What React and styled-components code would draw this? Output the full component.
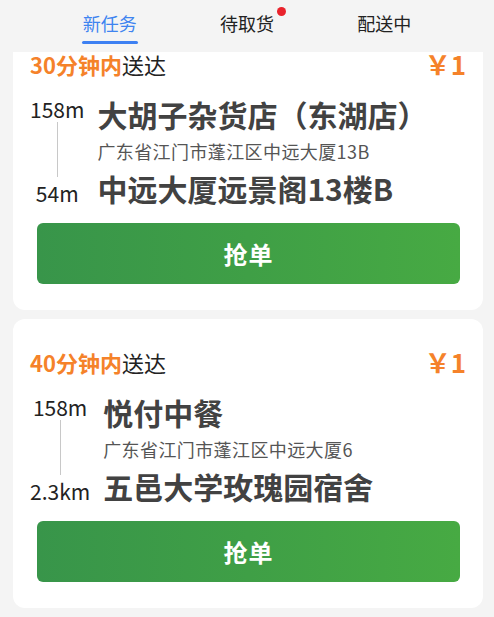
import React, { useLayoutEffect, useRef } from "react";
import styled, { createGlobalStyle } from "styled-components";

const Global = createGlobalStyle`
  html, body { margin: 0; padding: 0; background: #f4f4f4; }
  body { font-family: "Noto Sans CJK SC", "Noto Sans", sans-serif; }
  * { box-sizing: border-box; }
`;

const Page = styled.div`
  height: 617px;
  display: flex;
  flex-direction: column;
  background: #f4f4f4;
  overflow: hidden;
`;

const TabBar = styled.div`
  flex: 0 0 52px;
  display: grid;
  grid-template-columns: repeat(3, 1fr);
  padding: 0 41px;
`;

const Tab = styled.div`
  display: flex;
  flex-direction: column;
  align-items: center;
  padding-top: 10px;
`;

const TabLabel = styled.span`
  position: relative;
  font-size: 18px;
  line-height: 27px;
  color: ${(p) => (p.$active ? "#3f84f0" : "#222")};
`;

const Dot = styled.span`
  position: absolute;
  right: -12px;
  top: -3px;
  width: 9px;
  height: 9px;
  border-radius: 50%;
  background: #e9232c;
`;

const Underline = styled.div`
  margin-top: 4px;
  width: 56px;
  height: 3px;
  border-radius: 2px;
  background: ${(p) => (p.$active ? "#3d80f2" : "transparent")};
`;

const List = styled.div`
  flex: 1;
  min-height: 0;
  overflow: hidden;
  padding: 9px 11px 9px 13px;
  display: flex;
  flex-direction: column;
  gap: 9px;
`;

const Card = styled.div`
  flex: 0 0 auto;
  background: #fff;
  border-radius: 12px;
  padding: 29px 17px 26px 17px;
`;

const Header = styled.div`
  display: flex;
  align-items: center;
  justify-content: space-between;
  height: 28px;
`;

const Deadline = styled.div`
  font-size: 22px;
  line-height: 28px;
  color: #222;
`;

const Em = styled.span`
  color: #f5822a;
  font-weight: 700;
`;

const Price = styled.div`
  font-size: 26px;
  font-weight: 700;
  line-height: 28px;
  color: #f5822a;
`;

const Route = styled.div`
  margin-top: 18px;
  display: flex;
  gap: 13px;
`;

const DistCol = styled.div`
  display: flex;
  flex-direction: column;
  align-items: center;
`;

const Dist = styled.div`
  font-size: 21px;
  line-height: 26px;
  color: #222;
  white-space: nowrap;
`;

const Line = styled.div`
  flex: 1;
  width: 1px;
  background: #c8c8c8;
  margin: 0 0 3px;
`;

const Info = styled.div`
  display: flex;
  flex-direction: column;
  gap: 6px;
`;

const Title = styled.div`
  font-size: 30px;
  font-weight: 700;
  line-height: 36px;
  color: #424242;
  white-space: nowrap;
`;

const Address = styled.div`
  font-size: 18px;
  line-height: 26px;
  letter-spacing: 0.4px;
  color: #555;
`;

const GrabButton = styled.button`
  display: block;
  width: calc(100% - 13px);
  margin: 17px 6px 0 7px;
  height: 61px;
  border: none;
  border-radius: 6px;
  background: linear-gradient(90deg, #38954a 0%, #3f9f46 50%, #47aa43 100%);
  color: #fff;
  font-family: inherit;
  font-size: 24px;
  font-weight: 700;
  letter-spacing: 1px;
`;

const tabs = [
  { label: "新任务", active: true },
  { label: "待取货", dot: true },
  { label: "配送中" },
];

const orders = [
  {
    time: "30分钟内",
    price: "￥1",
    from: "158m",
    to: "54m",
    shop: "大胡子杂货店（东湖店）",
    address: "广东省江门市蓬江区中远大厦13B",
    dest: "中远大厦远景阁13楼B",
  },
  {
    time: "40分钟内",
    price: "￥1",
    from: "158m",
    to: "2.3km",
    shop: "悦付中餐",
    address: "广东省江门市蓬江区中远大厦6",
    dest: "五邑大学玫瑰园宿舍",
  },
];

export default function App() {
  const listRef = useRef(null);
  useLayoutEffect(() => {
    if (listRef.current) listRef.current.scrollTop = 42;
  }, []);

  return (
    <Page>
      <Global />
      <TabBar>
        {tabs.map((t) => (
          <Tab key={t.label}>
            <TabLabel $active={t.active}>
              {t.label}
              {t.dot && <Dot />}
            </TabLabel>
            <Underline $active={t.active} />
          </Tab>
        ))}
      </TabBar>
      <List ref={listRef}>
        {orders.map((o, i) => (
          <Card key={i}>
            <Header>
              <Deadline>
                <Em>{o.time}</Em>送达
              </Deadline>
              <Price>{o.price}</Price>
            </Header>
            <Route>
              <DistCol>
                <Dist>{o.from}</Dist>
                <Line />
                <Dist>{o.to}</Dist>
              </DistCol>
              <Info>
                <Title>{o.shop}</Title>
                <Address>{o.address}</Address>
                <Title>{o.dest}</Title>
              </Info>
            </Route>
            <GrabButton>抢单</GrabButton>
          </Card>
        ))}
      </List>
    </Page>
  );
}
